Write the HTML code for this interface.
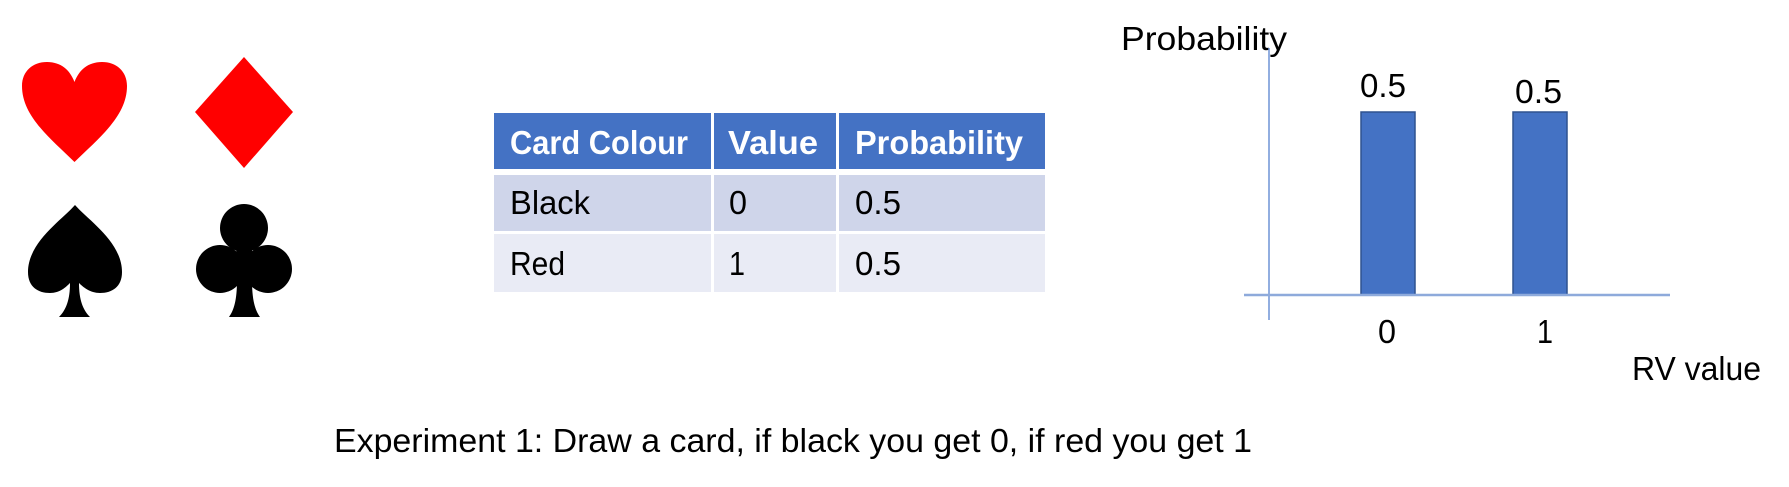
<!DOCTYPE html>
<html><head><meta charset="utf-8"><style>
html,body{margin:0;padding:0;background:#fff;width:1789px;height:487px;overflow:hidden}
svg{display:block}
text{font-family:"Liberation Sans",sans-serif;font-size:33px;fill:#000}
</style></head><body>
<svg width="1789" height="487" viewBox="0 0 1789 487" xmlns="http://www.w3.org/2000/svg">
<path fill="#f00" d="M74.5,162 C50,138 22,116 22,86 C22,71 33,62 47,62 C61,62 70,70 74.5,82 C79,70 88,62 102,62 C116,62 127,71 127,86 C127,116 99,138 74.5,162Z"/>
<polygon fill="#f00" points="244,57 293,112 244,168 195,112"/>
<path fill="#000" d="M75,205 C62,220 28,242 28,272 C28,287 38,293 50,293 C60,293 66,287 70,283 C70,300 66,310 59,317 L90,317 C83,310 79,300 79,283 C83,287 90,293 100,293 C112,293 122,287 122,272 C122,242 88,220 75,205Z"/>
<circle cx="244" cy="228" r="24" fill="#000"/>
<circle cx="220" cy="269" r="24" fill="#000"/>
<circle cx="268" cy="269" r="24" fill="#000"/>
<path fill="#000" d="M236,240 L252,240 L252,280 C252,300 255,310 260,317 L229,317 C234,310 237,300 237,280Z"/>
<path fill="#000" d="M225,255 L263,255 L258,285 L230,285Z"/>
<rect x="494" y="113" width="551" height="56" fill="#4472c4"/>
<rect x="494" y="175" width="551" height="56" fill="#cfd5ea"/>
<rect x="494" y="234" width="551" height="58" fill="#e9ebf5"/>
<rect x="494" y="169" width="551" height="6" fill="#fff"/>
<rect x="494" y="231" width="551" height="3" fill="#fff"/>
<rect x="711" y="113" width="3" height="179" fill="#fff"/>
<rect x="836" y="113" width="3" height="179" fill="#fff"/>
<text x="510" y="154" textLength="178" lengthAdjust="spacingAndGlyphs" font-weight="bold" style="fill:#fff">Card Colour</text>
<text x="728" y="154" textLength="90" lengthAdjust="spacingAndGlyphs" font-weight="bold" style="fill:#fff">Value</text>
<text x="855" y="154" textLength="168" lengthAdjust="spacingAndGlyphs" font-weight="bold" style="fill:#fff">Probability</text>
<text x="510" y="214" textLength="80" lengthAdjust="spacingAndGlyphs">Black</text>
<text x="729" y="214" textLength="18" lengthAdjust="spacingAndGlyphs">0</text>
<text x="855" y="214" textLength="46" lengthAdjust="spacingAndGlyphs">0.5</text>
<text x="510" y="275" textLength="55" lengthAdjust="spacingAndGlyphs">Red</text>
<text x="729" y="275" textLength="16" lengthAdjust="spacingAndGlyphs">1</text>
<text x="855" y="275" textLength="46" lengthAdjust="spacingAndGlyphs">0.5</text>
<text x="1121" y="50" textLength="166" lengthAdjust="spacingAndGlyphs">Probability</text>
<line x1="1269" y1="48" x2="1269" y2="320" stroke="#6f93d6" stroke-width="1.5"/>
<rect x="1361" y="112" width="54" height="183" fill="#4472c4" stroke="#2f528f" stroke-width="1.5"/>
<rect x="1513" y="112" width="54" height="183" fill="#4472c4" stroke="#2f528f" stroke-width="1.5"/>
<line x1="1244" y1="295" x2="1670" y2="295" stroke="#8eaadb" stroke-width="2.5"/>
<text x="1360" y="97" textLength="46" lengthAdjust="spacingAndGlyphs">0.5</text>
<text x="1515" y="103" textLength="47" lengthAdjust="spacingAndGlyphs">0.5</text>
<text x="1378" y="343" textLength="18" lengthAdjust="spacingAndGlyphs">0</text>
<text x="1537" y="343" textLength="16" lengthAdjust="spacingAndGlyphs">1</text>
<text x="1632" y="380" textLength="129" lengthAdjust="spacingAndGlyphs">RV value</text>
<text x="334" y="452" textLength="918" lengthAdjust="spacingAndGlyphs">Experiment 1: Draw a card, if black you get 0, if red you get 1</text>
</svg>
</body></html>
